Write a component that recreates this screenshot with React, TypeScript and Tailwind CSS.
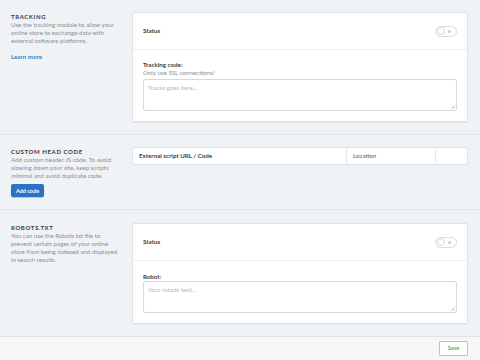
import React from 'react';

const font = { fontFamily: 'Lato, "Open Sans", sans-serif' };

const Toggle = () => (
  <div className="w-[22px] h-[11px] rounded-full border border-[#d9dcdf] bg-white flex items-center justify-between px-[1px]">
    <div className="w-[8px] h-[8px] rounded-full border border-[#d3d6d9] bg-white" />
    <div className="w-[3px] h-[3px] rounded-full bg-[#c8cbce] mr-[4px]" />
  </div>
);

const SectionInfo: React.FC<{ title: string; children: React.ReactNode }> = ({ title, children }) => (
  <div className="w-[132px] shrink-0 pl-[11px] pr-[12px]">
    <h3 className="text-[6px] leading-[9px] font-bold tracking-[0.1em] text-[#333a40] uppercase">{title}</h3>
    <div className="text-[6.2px] leading-[8px] text-[#8a8f96]">{children}</div>
  </div>
);

const StatusCard: React.FC<{ children: React.ReactNode }> = ({ children }) => (
  <div className="flex-1 bg-white border border-[#dde1e5] rounded-[2px] shadow-[0_1px_1px_rgba(0,0,0,0.04)]">
    <div className="h-[37px] flex items-center justify-between pl-[10px] pr-[10px] border-b border-[#eceef0]">
      <span className="text-[6.2px] font-bold text-[#3a3f44]">Status</span>
      <Toggle />
    </div>
    <div className="px-[10px] pt-[11px] pb-[10px]">{children}</div>
  </div>
);

const Textarea: React.FC<{ placeholder: string }> = ({ placeholder }) => (
  <div className="relative h-[32px] border border-[#d5d9dc] rounded-[2px] px-[4px] pt-[4px] text-[6.2px] leading-[8px] text-[#b3b7bb]">
    {placeholder}
    <svg className="absolute right-[1px] bottom-[1px]" width="4" height="4" viewBox="0 0 4 4">
      <path d="M4 0L0 4M4 2L2 4" stroke="#aaa" strokeWidth="0.6" />
    </svg>
  </div>
);

export default function App() {
  return (
    <div className="w-[480px] h-[360px] bg-[#f0f3f6] flex flex-col overflow-hidden" style={font}>
      {/* Tracking */}
      <section className="flex pt-[12px] pb-[12px] pr-[12px] border-b border-[#e3e6e9]">
        <SectionInfo title="Tracking">
          <p className="pr-[4px]">Use the tracking module to allow your online store to exchange data with external software platforms.</p>
          <a className="block mt-[8px] text-[#3f7dc6] font-bold">Learn more</a>
        </SectionInfo>
        <StatusCard>
          <div className="text-[6.2px] leading-[8px] font-bold text-[#3a3f44]">Tracking code:</div>
          <div className="text-[6.2px] leading-[8px] text-[#8a8f96] mb-[2px]">Only use SSL connections!</div>
          <Textarea placeholder="Tracks goes here..." />
        </StatusCard>
      </section>

      {/* Custom head code */}
      <section className="flex pt-[12px] h-[75px] pr-[12px] border-b border-[#e3e6e9]">
        <SectionInfo title="Custom head code">
          <p className="pr-[4px]">Add custom header JS code. To avoid slowing down your site, keep scripts minimal and avoid duplicate code.</p>
          <button className="mt-[4px] w-[33px] h-[13px] rounded-[2px] bg-[#2b72c7] text-white text-[5.5px] font-bold shadow-[0_1px_1px_rgba(0,0,0,0.2)]">
            Add code
          </button>
        </SectionInfo>
        <div className="flex-1 self-start h-[18px] bg-white border border-[#dde1e5] rounded-[2px] flex text-[6.2px] text-[#3a3f44] font-bold">
          <div className="w-[213px] flex items-center pl-[6px]">External script URL / Code</div>
          <div className="w-[89px] flex items-center pl-[6px] border-l border-[#e6e8ea] font-normal text-[#555b61]">Location</div>
          <div className="flex-1 border-l border-[#e6e8ea]" />
        </div>
      </section>

      {/* Robots */}
      <section className="flex pt-[13px] pb-[12px] pr-[12px] border-b border-[#e0e3e6]">
        <SectionInfo title="Robots.txt">
          <p>You can use the Robots.txt file to prevent certain pages of your online store from being indexed and displayed in search results.</p>
        </SectionInfo>
        <StatusCard>
          <div className="text-[6.2px] leading-[9px] font-bold text-[#3a3f44]">Robot:</div>
          <Textarea placeholder="Your robots text..." />
        </StatusCard>
      </section>

      {/* Footer */}
      <footer className="flex-1 bg-[#f7f7f7] flex items-center justify-end pr-[12px]">
        <button className="w-[29px] h-[15px] border border-[#9ed9a8] bg-white text-[#4cae5a] text-[5.5px] font-bold rounded-[1px]">
          Save
        </button>
      </footer>
    </div>
  );
}
